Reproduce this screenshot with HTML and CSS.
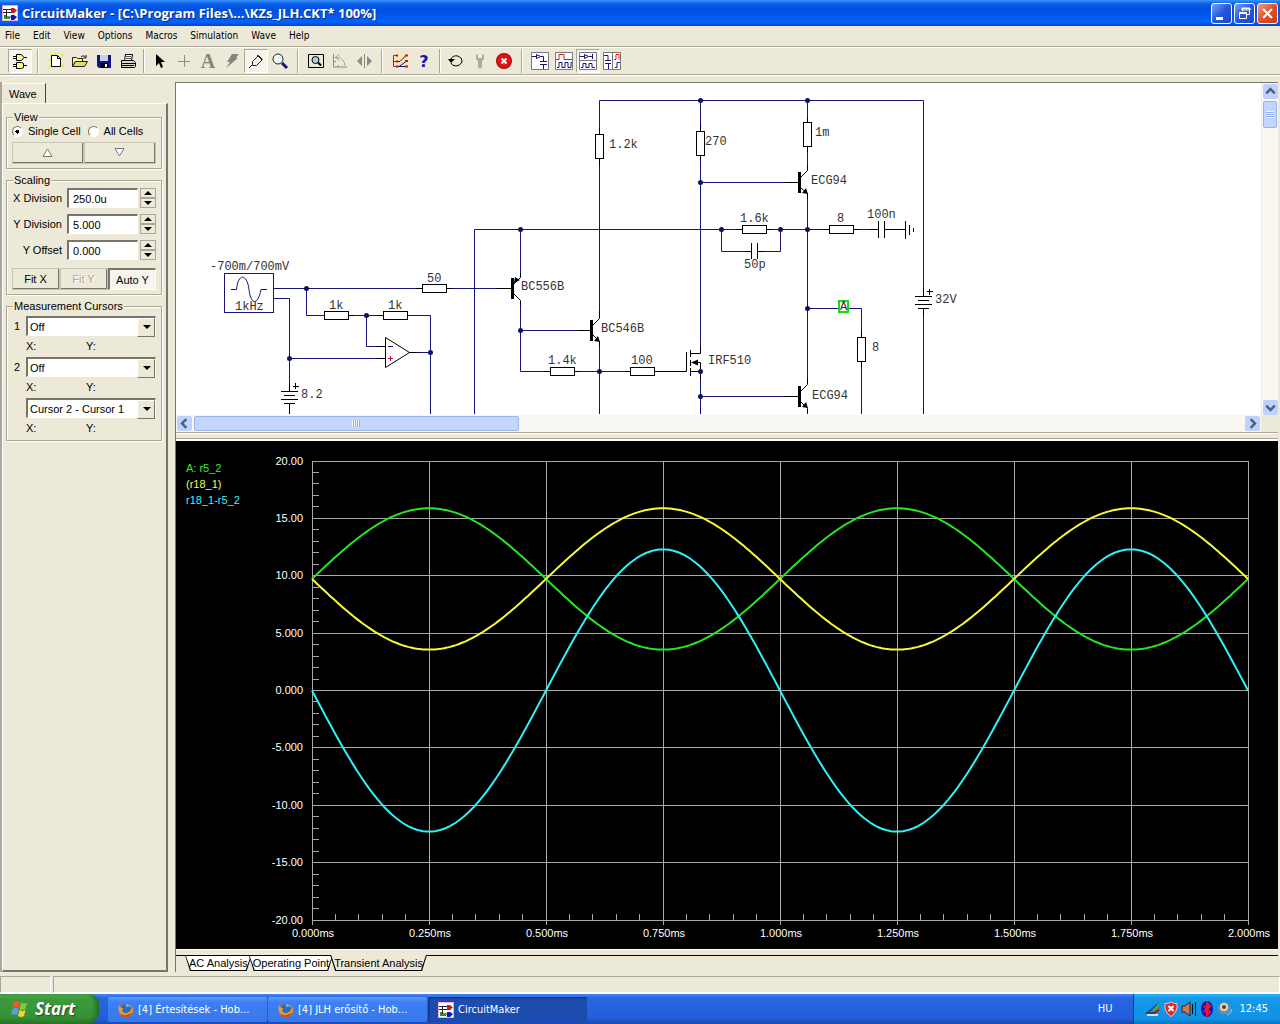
FILE: index.html
```html
<!DOCTYPE html>
<html lang="en">
<head>
  <meta charset="utf-8" />
  <title>CircuitMaker</title>
  <link rel="stylesheet" href="styles.css">
</head>
<body>
  <!-- Shared icons -->
  <svg class="defs" aria-hidden="true">
    <symbol id="app-icon" viewBox="0 0 16 16">
      <rect width="16" height="16" fill="#fff" stroke="#f0a8e0" stroke-width="2"/>
      <path d="M1 4.500h8M1 7.500h8M4.500 4v8h6M4.500 7.500v2" stroke="#222" fill="none"/>
      <path d="M9 3h3l3 2.500-3 2.500h-3z" fill="#d01818"/>
      <path d="M9 10h3l3 2-3 3h-3z" fill="#1414b0"/>
      <path d="M3 10v3h5" stroke="#18a018" stroke-width="2" fill="none"/>
    </symbol>
    <symbol id="firefox" viewBox="0 0 16 16">
      <circle cx="8" cy="8" r="7" fill="#e8650a"/>
      <circle cx="8" cy="6.500" r="5" fill="#2b6cc4"/>
      <path d="M8 2c2 0 4 1 5 3-2-1-3-1-4 0-1-1-2-2-1-3z" fill="#6cc0f0"/>
      <path d="M1.500 3c0 2 1 3 3 3 1 1 0 2-.5 2.500C5 11 8 12 11 10c2-1 3-3 2.500-6 2 3 2 7-1 9.500S3 15 1.500 11 .5 5 1.500 3z" fill="#f39a1e"/>
      <path d="M2 11c3 3 8 3 12-1-1 4-4 5-6 5s-5-1-6-4z" fill="#d2400f"/>
    </symbol>
  </svg>

  <header class="title-bar">
    <svg class="icon"><use href="#app-icon"/></svg>
    <h1>CircuitMaker - [C:\Program Files\...\KZs_JLH.CKT* 100%]</h1>
    <div class="window-buttons">
      <button type="button" aria-label="Minimize"><svg viewBox="0 0 19 19"><path d="M4 13h7v3H4z" fill="#fff"/></svg></button>
      <button type="button" aria-label="Restore"><svg viewBox="0 0 19 19"><path d="M7.500 7V4.500h7v6H12M7 4h8v2H7z" fill="none" stroke="#fff"/><path d="M4.500 8.500h7v6h-7zM4 9.500h8" fill="none" stroke="#fff"/></svg></button>
      <button type="button" aria-label="Close" class="close"><svg viewBox="0 0 19 19"><path d="M5 5l9 9M14 5l-9 9" stroke="#fff" stroke-width="2.200"/></svg></button>
    </div>
  </header>

  <nav class="menu-bar">
    <button type="button">File</button>
    <button type="button">Edit</button>
    <button type="button">View</button>
    <button type="button">Options</button>
    <button type="button">Macros</button>
    <button type="button">Simulation</button>
    <button type="button">Wave</button>
    <button type="button">Help</button>
  </nav>

  <div class="toolbar">
    <button type="button" class="pressed" aria-label="Parts">
      <svg viewBox="0 0 16 16"><path d="M4.500 1.500h5l2.500 3-2.500 3h-5zM4.500 9.500h5l2 1v4l-2 1h-5z" fill="#fbfb90" stroke="#000"/><path d="M1 3.500h3M1 5.500h3M12 4.500h3M1 11.500h3M1 13.500h3M12 12.500h3" stroke="#000"/></svg>
    </button>
    <span class="sep"></span>
    <button type="button" aria-label="New">
      <svg viewBox="0 0 16 16"><path d="M2 1l3 2M13 1l2 2M1 13l2 2M14 12l2 2M1 7h2M7 0v2" stroke="#e8e838" stroke-width="2"/><path d="M3.500 2.500h6l3 3v8h-9z" fill="#fff" stroke="#000"/><path d="M9.500 2.500v3h3" fill="none" stroke="#000"/></svg>
    </button>
    <button type="button" aria-label="Open">
      <svg viewBox="0 0 16 16"><path d="M.5 13.500v-9h4l1 1h5v3h-7z" fill="#fbf6a0" stroke="#222"/><path d="M.5 13.500l3-5h12l-3 5z" fill="#e8dc58" stroke="#222"/><path d="M9 3.500q3-2 5 1M14 2v3h-3" fill="none" stroke="#222"/></svg>
    </button>
    <button type="button" aria-label="Save">
      <svg viewBox="0 0 16 16"><path d="M1 2h14v13H3l-2-2z" fill="#14147c"/><path d="M4 2h8v6H4z" fill="#c8d0e8"/><path d="M5 10h7v5H5z" fill="#000"/><path d="M9 11h2v3H9z" fill="#fff"/></svg>
    </button>
    <button type="button" aria-label="Print">
      <svg viewBox="0 0 16 16"><path d="M4.500 7.500l1-6h7l-1 6z" fill="#fff" stroke="#000"/><path d="M6 3.500h5M6 5.500h5" stroke="#555"/><path d="M1.500 7.500h12l2 2v4l-1 1h-13z" fill="#d8d8d0" stroke="#000"/><path d="M1 10.500h14M2 12.500h12" stroke="#000"/></svg>
    </button>
    <span class="sep tight"></span>
    <button type="button" aria-label="Arrow tool">
      <svg viewBox="0 0 16 16"><path d="M4 1v12l3-3 2 5 2-1-2-5h4z" fill="#000"/></svg>
    </button>
    <button type="button" aria-label="Wire tool">
      <svg viewBox="0 0 16 16"><path d="M2 8.500h12M8.500 2v12" stroke="#8c8c84"/></svg>
    </button>
    <button type="button" aria-label="Text tool">
      <svg viewBox="0 0 16 16"><text x="8" y="15" class="letter-icon serif">A</text></svg>
    </button>
    <button type="button" aria-label="Delete tool">
      <svg viewBox="0 0 16 16"><path d="M8 1h7l-3 4h2L2 15l4-6H3z" fill="#85857d"/></svg>
    </button>
    <button type="button" class="pressed" aria-label="Probe tool">
      <svg viewBox="0 0 16 16"><path d="M1 15l4-4" stroke="#000"/><path d="M4.500 11.500v-3l6-6 4 4-6 6h-4zM9 2l5 5" fill="#f4f2e8" stroke="#222"/></svg>
    </button>
    <button type="button" aria-label="Zoom tool">
      <svg viewBox="0 0 16 16"><circle cx="6" cy="6" r="5" fill="#eefafa" stroke="#222"/><path d="M10 10l5 5" stroke="#14147c" stroke-width="3"/></svg>
    </button>
    <span class="sep"></span>
    <button type="button" aria-label="Fit to window">
      <svg viewBox="0 0 16 16"><path d="M.5 1.500h15v13H.5z" fill="#e8e8dc" stroke="#000"/><circle cx="7.500" cy="7" r="3.500" fill="#a8d4dc" stroke="#000"/><path d="M10 9.500l3 3" stroke="#000" stroke-width="2"/></svg>
    </button>
    <button type="button" aria-label="Rotate">
      <svg viewBox="0 0 16 16"><path d="M1.500 1v13H15" fill="none" stroke="#8c8c84"/><path d="M3 4.500q9-1 10 9" fill="none" stroke="#8c8c84" stroke-dasharray="2 1"/><path d="M7 1.500L4 4.500l3 3M2 8.500h2M6 12v2" fill="none" stroke="#8c8c84"/></svg>
    </button>
    <button type="button" aria-label="Mirror">
      <svg viewBox="0 0 16 16"><path d="M8.500 1v14" stroke="#8c8c84"/><path d="M6 3v10L1 8zM11 3v10l5-5z" fill="#8c8c84"/></svg>
    </button>
    <span class="sep"></span>
    <button type="button" aria-label="Digital options">
      <svg viewBox="0 0 16 16"><path d="M1 1h14v14H1z" fill="#fbe4b0"/><path d="M5 2.500H1.500v11H5M1 8.500h4" fill="none" stroke="#c01818"/><path d="M5 8.500h3l6-6M5 13.500h2l7-5M7 13.500h7" fill="none" stroke="#14147c"/><path d="M4 1.500h2v2H4zM4 7.500h2v2H4zM4 12.500h2v2H4zM13 1.500h3v2h-3zM13 7h3v2h-3zM13 12.500h3v2h-3z" fill="#c01818"/></svg>
    </button>
    <button type="button" aria-label="Help">
      <svg viewBox="0 0 16 16"><text x="8" y="14" class="letter-icon help">?</text></svg>
    </button>
    <span class="sep tight"></span>
    <button type="button" aria-label="Reset">
      <svg viewBox="0 0 16 16"><path d="M3 6q2-4 7-3 5 2 4 6-2 4-6 4-4 0-5-3" fill="none" stroke="#000"/><path d="M0 6h7L3 10z" fill="#000"/></svg>
    </button>
    <button type="button" aria-label="Step">
      <svg viewBox="0 0 16 16"><path d="M4 1v5l2 2v6l2 2 2-2V8l2-2V1l-2 1v3H6V2z" fill="#aeaca0"/></svg>
    </button>
    <button type="button" aria-label="Stop">
      <svg viewBox="0 0 16 16"><circle cx="8" cy="8" r="8" fill="#a80808"/><circle cx="8" cy="8" r="7" fill="#e01414"/><path d="M5.500 5.500l5 5M10.500 5.500l-5 5" stroke="#fff" stroke-width="2"/></svg>
    </button>
    <span class="sep"></span>
    <button type="button" aria-label="Schematic view">
      <svg class="wide" viewBox="0 0 18 18"><path d="M.5.5h17v17H.5z" fill="#fff" stroke="#777"/><path d="M1 4.500h4M5.500 2.500v4l4-2zM10 4.500h2.500v5M9 9.500h7M9 12.500h7M12.500 13v4" fill="none" stroke="#14147c"/></svg>
    </button>
    <button type="button" aria-label="Waveform view">
      <svg class="wide" viewBox="0 0 18 18"><path d="M.5.5h17v17H.5z" fill="#fff" stroke="#777"/><path d="M1 7.500h3v-5h5v5h8" fill="none" stroke="#d01818"/><path d="M2 15.500h2v-5h3v5h3v-5h3v5h3v-5h1" fill="none" stroke="#14147c"/></svg>
    </button>
    <button type="button" class="pressed" aria-label="Split horizontally">
      <svg class="wide" viewBox="0 0 18 18"><path d="M.5.5h17v17H.5zM0 8.500h18" fill="#fff" stroke="#777"/><path d="M1 4.500h4M5.500 2.500v4l4-2zM10 4.500h3M13.500 2v5M2 15.500h2v-4h3v4h3v-4h3v4h3" fill="none" stroke="#14147c"/></svg>
    </button>
    <button type="button" aria-label="Split vertically">
      <svg class="wide" viewBox="0 0 18 18"><path d="M.5.5h17v17H.5zM9.500 0v18" fill="#fff" stroke="#777"/><path d="M1 3.500h4v5M2 8.500h6M2 11.500h6M5.500 12v5M12 15.500h2v-5h3" fill="none" stroke="#14147c"/><path d="M11 7.500h2v-5h3v5" fill="none" stroke="#d01818"/></svg>
    </button>
  </div>

  <main class="workspace">
    <aside class="side-panel">
      <div class="side-tabs"><button type="button" class="side-tab">Wave</button></div>
      <form class="side-body">
        <fieldset class="group view-group">
          <legend>View</legend>
          <div class="radio-row">
            <label><input type="radio" name="cells" checked> Single Cell</label>
            <label><input type="radio" name="cells"> All Cells</label>
          </div>
          <div class="button-row">
            <button type="button" aria-label="Cell up"><svg viewBox="0 0 11 9"><path d="M5.500 1L10 8.500H1z" fill="#fff" stroke="#777"/></svg></button>
            <button type="button" aria-label="Cell down"><svg viewBox="0 0 11 9"><path d="M5.500 8L10 .5H1z" fill="#fff" stroke="#777"/></svg></button>
          </div>
        </fieldset>

        <fieldset class="group scaling-group">
          <legend>Scaling</legend>
          <div class="field">
            <label for="xDivision">X Division</label>
            <input type="text" id="xDivision" value="250.0u">
            <span class="spinner"><button type="button" aria-label="X Division up"></button><button type="button" aria-label="X Division down"></button></span>
          </div>
          <div class="field">
            <label for="yDivision">Y Division</label>
            <input type="text" id="yDivision" value="5.000">
            <span class="spinner"><button type="button" aria-label="Y Division up"></button><button type="button" aria-label="Y Division down"></button></span>
          </div>
          <div class="field">
            <label for="yOffset">Y Offset</label>
            <input type="text" id="yOffset" value="0.000">
            <span class="spinner"><button type="button" aria-label="Y Offset up"></button><button type="button" aria-label="Y Offset down"></button></span>
          </div>
          <div class="button-row">
            <button type="button">Fit X</button>
            <button type="button" disabled>Fit Y</button>
            <button type="button" class="pressed">Auto Y</button>
          </div>
        </fieldset>

        <fieldset class="group cursor-group">
          <legend>Measurement Cursors</legend>
          <div class="cursor-row">
            <label for="cursor1">1</label>
            <span class="select-box"><select id="cursor1"><option>Off</option></select></span>
          </div>
          <div class="readout"><span>X:</span><span>Y:</span></div>
          <div class="cursor-row">
            <label for="cursor2">2</label>
            <span class="select-box"><select id="cursor2"><option>Off</option></select></span>
          </div>
          <div class="readout"><span>X:</span><span>Y:</span></div>
          <div class="cursor-row">
            <span class="select-box"><select aria-label="Cursor difference"><option>Cursor 2 - Cursor 1</option></select></span>
          </div>
          <div class="readout"><span>X:</span><span>Y:</span></div>
        </fieldset>
      </form>
    </aside>

    <section class="documents">
      <div class="schematic-pane">
        <div class="schematic">
          <svg width="1086" height="331" viewBox="176 83 1086 331">
            <!-- Wires -->
            <g class="wire">
              <path d="M273.500 288.500H422M446 288.500H497M306.500 288.500V315.500H324M348 315.500H383M407 315.500H430.500V414M366.500 315.500V346.500H385"/>
              <path d="M273.500 298.500H289.500V384M289.500 358.500H385M409 352.500H430.500"/>
              <path d="M474.500 414V229.500H742M766 229.500H829M853 229.500H870M520.500 229.500V274M520.500 304V371.500H544M520.500 330.500H578"/>
              <path d="M599.500 134V100.500H923.500V288M599.500 165V312M599.500 347V414M580 371.500H625M923.500 316V414"/>
              <path d="M700.500 100.500V131M700.500 160V346M700.500 380V414M700.500 182.500H785M700.500 396.500H785"/>
              <path d="M807.500 100.500V117M807.500 151V165M807.500 199V378M721.500 229.500V251.500H745M764 251.500H780.500V229.500M807.500 308.500H861.500V337M861.500 366V414"/>
              <rect x="224.500" y="273.500" width="49" height="39"/>
              <path d="M231 289.500H236.500C238 273 247 273 249 289.500S258 305 261 289.500H267"/>
            </g>
            <!-- Part leads and symbols -->
            <g class="part">
              <path d="M416 288.500H422M446 288.500H452M497 288.500H511M348 315.500H354M377 315.500H383M385 346.500H377M385 358.500H377"/>
              <path d="M385.500 337.500V367.500L409.500 352.500zM409 352.500H417"/>
              <path d="M289.500 384V391.500M281 391.500H298M284 395.500H295M281 399.500H298M284 403.500H295M289.500 403.500V414M295.500 383V389M293 386.500H299"/>
              <path d="M923.500 288V296.500M915 296.500H932M918 300.500H929M915 304.500H932M918 308.500H929M923.500 308.500V316M929.500 289V295M927 291.500H933"/>
              <path d="M513 285L520.500 277.500V273M513 293L520.500 300.500V305M578 330.500H591M593 325L599.500 318.500V311M593 335L599.500 341.500V347"/>
              <path d="M599.500 128V134M599.500 158V165M700.500 125V131M700.500 155V161M807.500 117V122M807.500 146V152M861.500 331V337M861.500 361V367"/>
              <path d="M785 182.500H799M801 177L807.500 170.500V165M801 188L807.500 193.500V199M785 396.500H799M801 391L807.500 384.500V378M801 402L807.500 408.500V414"/>
              <path d="M544 371.500H550M574 371.500H580M625 371.500H630M654 371.500H686.500V352M690.500 350V357M690.500 360V366M690.500 368V376M690.500 353.500H700.500V346M692 362.500H700.500V380M690.500 371.500H700.500"/>
              <path d="M736 229.500H742M766 229.500H772M751.500 243V259M757.500 243V259M745 251.500H751.500M757.500 251.500H764"/>
              <path d="M823 229.500H829M853 229.500H859M870 229.500H878.500V221M878.500 221V238M884.500 221V238M884.500 229.500H905.500M905.500 221V239M909.500 225V235M913.500 228V232"/>
              <rect x="422.500" y="284.500" width="24" height="8"/>
              <rect x="324.500" y="311.500" width="24" height="8"/>
              <rect x="383.500" y="311.500" width="24" height="8"/>
              <rect x="550.500" y="367.500" width="24" height="8"/>
              <rect x="630.500" y="367.500" width="24" height="8"/>
              <rect x="742.500" y="225.500" width="24" height="8"/>
              <rect x="829.500" y="225.500" width="24" height="8"/>
              <rect x="595.500" y="134.500" width="8" height="24"/>
              <rect x="696.500" y="131.500" width="8" height="24"/>
              <rect x="803.500" y="122.500" width="8" height="24"/>
              <rect x="857.500" y="337.500" width="8" height="24"/>
            </g>
            <g class="solid">
              <path d="M511 278h3v21h-3zM590 320h3v21h-3zM798 172h3v21h-3zM798 386h3v21h-3z"/>
              <path d="M514 283l1-6 5 3zM600 342l-2-6-4 5zM808 194l-2-6-4 5zM808 408l-2-6-4 5zM691 362.500l7-3v6z"/>
            </g>
            <path d="M388 346.500H393" stroke="#14147c"/>
            <path d="M388 358.500H393M390.500 356V361" stroke="#c01030"/>
            <g class="node">
              <circle cx="306.500" cy="288.500" r="2.500"/><circle cx="366.500" cy="315.500" r="2.500"/>
              <circle cx="289.500" cy="358.500" r="2.500"/><circle cx="430.500" cy="352.500" r="2.500"/>
              <circle cx="520.500" cy="229.500" r="2.500"/><circle cx="520.500" cy="330.500" r="2.500"/>
              <circle cx="599.500" cy="371.500" r="2.500"/><circle cx="700.500" cy="100.500" r="2.500"/>
              <circle cx="807.500" cy="100.500" r="2.500"/><circle cx="700.500" cy="182.500" r="2.500"/>
              <circle cx="721.500" cy="229.500" r="2.500"/><circle cx="780.500" cy="229.500" r="2.500"/>
              <circle cx="807.500" cy="229.500" r="2.500"/><circle cx="807.500" cy="308.500" r="2.500"/>
              <circle cx="700.500" cy="371.500" r="2.500"/><circle cx="700.500" cy="396.500" r="2.500"/>
            </g>
            <!-- Probe A -->
            <rect x="839" y="301" width="9" height="11" fill="#fff" stroke="#12dc12" stroke-width="2"/>
            <g class="part-label">
              <text x="210" y="270">-700m/700mV</text>
              <text x="235" y="310">1kHz</text>
              <text x="427" y="282">50</text>
              <text x="329" y="309">1k</text>
              <text x="388" y="309">1k</text>
              <text x="301" y="398">8.2</text>
              <text x="521" y="290">BC556B</text>
              <text x="601" y="332">BC546B</text>
              <text x="548" y="364">1.4k</text>
              <text x="631" y="364">100</text>
              <text x="708" y="364">IRF510</text>
              <text x="609" y="148">1.2k</text>
              <text x="705" y="145">270</text>
              <text x="815" y="136">1m</text>
              <text x="811" y="184">ECG94</text>
              <text x="812" y="399">ECG94</text>
              <text x="740" y="222">1.6k</text>
              <text x="744" y="268">50p</text>
              <text x="837" y="222">8</text>
              <text x="867" y="218">100n</text>
              <text x="872" y="351">8</text>
              <text x="935" y="303">32V</text>
              <text x="840" y="310">A</text>
            </g>
          </svg>
        </div>
        <div class="scrollbar vertical">
          <button type="button" aria-label="Scroll up"><svg viewBox="0 0 9 9"><path d="M1 6l3.500-3.500L8 6"/></svg></button>
          <span class="thumb"></span>
          <button type="button" class="end" aria-label="Scroll down"><svg viewBox="0 0 9 9"><path d="M1 3l3.500 3.500L8 3"/></svg></button>
        </div>
        <div class="scrollbar horizontal">
          <button type="button" aria-label="Scroll left"><svg viewBox="0 0 9 9"><path d="M6 1L2.500 4.500 6 8"/></svg></button>
          <span class="thumb"></span>
          <button type="button" class="end" aria-label="Scroll right"><svg viewBox="0 0 9 9"><path d="M3 1l3.500 3.500L3 8"/></svg></button>
        </div>
      </div>

      <div class="splitter"></div>

      <div class="plot-pane"><svg id="plot"></svg></div>

      <nav class="sheet-tabs">
        <button type="button">AC Analysis</button>
        <button type="button">Operating Point</button>
        <button type="button" class="active">Transient Analysis</button>
        <span class="tab-rest"></span>
      </nav>
    </section>
  </main>

  <div class="status-bar"><span class="status-cell small"></span><span class="status-cell"></span></div>

  <footer class="taskbar">
    <button type="button" class="start">
      <svg viewBox="0 0 18 18"><path d="M3 2q3-2 6 0L7.500 8q-3-2-6 0z" fill="#f0582a"/><path d="M10 2.500q3 2 6 0L14.500 9q-3 2-6 0z" fill="#84c63c"/><path d="M1.500 9q3-2 6 0L6 15q-3-2-6 0z" fill="#5c9cf0"/><path d="M8.500 10q3 2 6 0L13 16q-3 2-6 0z" fill="#fad030"/></svg>
      Start
    </button>
    <div class="tasks">
      <button type="button"><svg class="icon"><use href="#firefox"/></svg>[4] Értesítések - Hob...</button>
      <button type="button"><svg class="icon"><use href="#firefox"/></svg>[4] JLH erősítő - Hob...</button>
      <button type="button" class="active"><svg class="icon"><use href="#app-icon"/></svg>CircuitMaker</button>
    </div>
    <span class="language">HU</span>
    <div class="tray">
      <svg viewBox="0 0 16 16"><path d="M2 13h11v2H2z" fill="#ddd"/><path d="M1 12L13 2l-2 6z" fill="#1838a0"/><path d="M6 10l8-8-1 6z" fill="#38b838"/><path d="M7 12l8-7v3l-5 4z" fill="#e03838"/><path d="M1 12h9l4-3" stroke="#111" fill="none"/></svg>
      <svg viewBox="0 0 16 16"><path d="M8 1q3 2 6 1.500Q15 11 8 15.500 1 11 2 2.500 5 3 8 1z" fill="#e02828" stroke="#f4c4c4"/><path d="M5.500 5l5 5M10.500 5l-5 5" stroke="#fff" stroke-width="2"/></svg>
      <svg viewBox="0 0 16 16"><path d="M1 5h3l5-4v14l-5-4H1z" fill="#d87848" stroke="#222"/><path d="M11.500 3v10M14.500 1v14" stroke="#111"/></svg>
      <svg viewBox="0 0 16 16"><ellipse cx="8" cy="8" rx="6" ry="8" fill="#1414b8"/><path d="M5 5l6 6-3 3V2l3 3-6 6" fill="none" stroke="#e81830" stroke-width="2"/></svg>
      <svg viewBox="0 0 16 16"><circle cx="7" cy="7" r="6" fill="#8a8a88"/><circle cx="7" cy="6" r="4" fill="#d8d8d0"/><circle cx="7" cy="6" r="2" fill="#444"/><path d="M10 14q4-1 5-6" stroke="#a8c8f8" fill="none"/></svg>
      <time>12:45</time>
    </div>
  </footer>

  <script src="plot.js"></script>
</body>
</html>
```
FILE: styles.css
```css
* {
  box-sizing: border-box;
}
body {
  display: flex;
  flex-direction: column;
  height: 100vh;
  margin: 0;
  overflow: hidden;
  background-color: #ece9d8;
  color: #000;
  font-family: "Liberation Sans", Arial, sans-serif;
  font-size: 11px;
  line-height: 14px;
}
button, input, select {
  margin: 0;
  padding: 0;
  border: 0;
  border-radius: 0;
  background: none;
  color: inherit;
  font: inherit;
}
svg {
  display: block;
  flex: none;
}
.defs {
  position: absolute;
  width: 0;
  height: 0;
}
.icon {
  width: 16px;
  height: 16px;
}

/* Title bar */
.title-bar {
  display: flex;
  flex: none;
  align-items: center;
  gap: 4px;
  height: 26px;
  padding: 0 2px;
  background: linear-gradient(#3a94fc 0, #0a5ce6 4px, #0050e0 10px, #0462fc 22px, #0046c8 26px);
  color: #fff;
}
.title-bar h1 {
  flex: 1;
  margin: 0;
  font: bold 13px/20px "Open Sans", sans-serif;
  text-shadow: 1px 1px #0a2a80;
}
.window-buttons {
  display: flex;
  gap: 2px;
}
.window-buttons button {
  width: 21px;
  height: 21px;
  border: 1px solid #fff;
  border-radius: 3px;
  background: linear-gradient(135deg, #7aa2f4, #2458dc 50%, #1c48c8);
}
.window-buttons svg {
  width: 19px;
  height: 19px;
}
.window-buttons .close {
  background: linear-gradient(135deg, #f0a088, #e05028 50%, #c83c10);
}

/* Menu */
.menu-bar {
  display: flex;
  flex: none;
  gap: 13px;
  height: 21px;
  padding: 0 5px;
  border-bottom: 1px solid #aca899;
  font: 10px/18px "DejaVu Sans Condensed", "Liberation Sans", sans-serif;
}

/* Toolbar */
.toolbar {
  display: flex;
  flex: none;
  align-items: center;
  height: 28px;
  padding: 0 8px;
  border-top: 1px solid #fff;
  border-bottom: 1px solid #aca899;
}
.toolbar button {
  display: flex;
  align-items: center;
  justify-content: center;
  width: 24px;
  height: 24px;
}
.toolbar svg {
  width: 16px;
  height: 16px;
  overflow: visible;
}
.toolbar svg.wide {
  width: 18px;
  height: 18px;
}
.pressed {
  border: 1px solid;
  border-color: #aca899 #fff #fff #aca899;
  background-color: #f6f4ec;
}
.sep {
  width: 2px;
  height: 24px;
  margin: 0 5px;
  border-left: 1px solid #aca899;
  border-right: 1px solid #fff;
}
.sep.tight {
  margin: 0 3px;
}
.letter-icon {
  font-weight: bold;
  text-anchor: middle;
}
.letter-icon.serif {
  fill: #85857d;
  font-family: "Liberation Serif", serif;
  font-size: 20px;
}
.letter-icon.help {
  fill: #1414b0;
  font-family: "DejaVu Sans", sans-serif;
  font-size: 16px;
}

/* Workspace */
.workspace {
  display: flex;
  flex: 1;
  min-height: 0;
  padding: 6px 2px 4px 0;
  border-top: 1px solid #fff;
}
.side-panel {
  display: flex;
  flex: none;
  flex-direction: column;
  width: 168px;
  border-left: 2px solid #aca899;
}
.side-tab {
  height: 20px;
  padding: 0 8px 0 7px;
  border-top: 1px solid #fff;
  border-right: 1px solid #444;
}
.side-body {
  flex: 1;
  padding: 6px 4px 6px 3px;
  border: solid;
  border-width: 1px 2px 2px 1px;
  border-color: #fff #77756a #77756a #fff;
}
.side-tabs {
  padding-top: 1px;
}
.group {
  min-width: 0;
  margin: 0 0 4px;
  padding: 0 5px 4px;
  border: 1px solid #aca899;
  box-shadow: inset 1px 1px #fff, 1px 1px #fff;
}
.group legend {
  margin-left: 1px;
  padding: 0 1px;
  background-color: #ece9d8;
}
.radio-row {
  display: flex;
  gap: 7px;
  padding-bottom: 4px;
}
.radio-row label {
  display: flex;
  align-items: center;
  gap: 5px;
}
.radio-row input {
  appearance: none;
  width: 11px;
  height: 11px;
  border: 1px solid;
  border-color: #77756a #fff #fff #77756a;
  border-radius: 50%;
  background-color: #fff;
}
.radio-row input:checked {
  background-image: radial-gradient(#000 2px, transparent 2px);
}
.button-row {
  display: flex;
}
.button-row button {
  display: flex;
  flex: 1;
  align-items: center;
  justify-content: center;
  height: 22px;
  border: solid;
  border-width: 1px 2px 2px 1px;
  border-color: #fff #77756a #77756a #fff;
  outline: 1px solid #c8c4b4;
  outline-offset: -1px;
}
.button-row svg {
  width: 11px;
  height: 9px;
}
.button-row button:disabled {
  color: #aca899;
  text-shadow: 1px 1px #fff;
}
.button-row .pressed {
  border-width: 2px 1px 1px 2px;
  border-color: #77756a #fff #fff #77756a;
  outline: 0;
}
.scaling-group {
  padding-top: 1px;
}
.scaling-group .button-row {
  padding-top: 2px;
}
.field {
  display: flex;
  align-items: center;
  height: 20px;
  margin-bottom: 6px;
}
.field label {
  width: 50px;
  margin-right: 5px;
  text-align: right;
  white-space: nowrap;
}
.field input {
  width: 71px;
  height: 20px;
  padding: 0 4px;
  border: solid;
  border-width: 2px 1px 1px 2px;
  border-color: #77756a #fff #fff #77756a;
  background-color: #fff;
}
.spinner {
  display: flex;
  flex: none;
  flex-direction: column;
  width: 16px;
  height: 20px;
  margin-left: 2px;
}
.spinner button {
  display: flex;
  flex: 1;
  align-items: center;
  justify-content: center;
  border: 1px solid;
  border-color: #fff #77756a #77756a #fff;
  outline: 1px solid #aca899;
  outline-offset: -1px;
}
.spinner button::before {
  border: 4px solid transparent;
  border-top-width: 0;
  border-bottom: 4px solid #000;
  content: "";
}
.spinner button + button::before {
  border-top: 4px solid #000;
  border-bottom-width: 0;
}
.cursor-group {
  padding-top: 3px;
  padding-bottom: 1px;
}
.cursor-row {
  display: flex;
  align-items: center;
  justify-content: flex-end;
}
.cursor-row label {
  flex: 1;
  padding-left: 2px;
}
.select-box {
  position: relative;
  width: 130px;
}
.select-box select {
  display: block;
  width: 100%;
  height: 20px;
  padding: 0 2px;
  appearance: none;
  border: solid;
  border-width: 2px 1px 1px 2px;
  border-color: #77756a #fff #fff #77756a;
  background-color: #fff;
}
.select-box::before {
  position: absolute;
  top: 2px;
  right: 1px;
  width: 16px;
  height: 17px;
  border: 1px solid;
  border-color: #fff #77756a #77756a #fff;
  background-color: #ece9d8;
  content: "";
  pointer-events: none;
}
.select-box::after {
  position: absolute;
  top: 9px;
  right: 5px;
  border: 4px solid transparent;
  border-top-color: #000;
  border-bottom-width: 0;
  content: "";
  pointer-events: none;
}
.readout {
  display: flex;
  padding: 3px 0 4px 14px;
}
.readout span {
  width: 60px;
}

/* Documents */
.documents {
  display: flex;
  flex: 1;
  flex-direction: column;
  min-width: 0;
  margin-left: 7px;
  border-left: 1px solid #77756a;
}
.schematic-pane {
  display: grid;
  flex: 350;
  grid-template-rows: minmax(0, 1fr) 17px;
  grid-template-columns: minmax(0, 1fr) 17px;
  min-height: 0;
  border-top: 1px solid #77756a;
  border-bottom: 1px solid #aca899;
}
.schematic {
  overflow: hidden;
  background-color: #fff;
}
.wire {
  fill: none;
  stroke: #14147c;
}
.part {
  fill: none;
  stroke: #000;
}
.part rect {
  fill: #fff;
}
.solid {
  fill: #000;
}
.node {
  fill: #10105c;
}
.part-label {
  fill: #333;
  font: 12px "Liberation Mono", "Courier New", monospace;
}

/* Scrollbars */
.scrollbar {
  display: flex;
  gap: 2px;
  background-color: #f8f7f2;
}
.scrollbar.vertical {
  flex-direction: column;
  padding: 1px 1px 0;
  border-left: 1px solid #eeede5;
}
.scrollbar.horizontal {
  padding: 1px;
}
.scrollbar button {
  display: flex;
  align-items: center;
  justify-content: center;
  width: 15px;
  height: 15px;
  border-radius: 2px;
  background-color: #c0d2fc;
}
.scrollbar .end {
  margin-top: auto;
}
.scrollbar.horizontal .end {
  margin: 0 0 0 auto;
}
.scrollbar svg {
  width: 11px;
  height: 11px;
  fill: none;
  stroke: #4a6084;
  stroke-width: 2;
}
.thumb {
  display: flex;
  align-items: center;
  justify-content: center;
  border: 1px solid #98b4ec;
  border-radius: 2px;
  background-color: #c4d5fd;
}
.thumb::before {
  width: 8px;
  height: 7px;
  background: repeating-linear-gradient(90deg, #eef4fe 0 1px, #8cb0f8 1px 2px);
  content: "";
}
.vertical .thumb {
  height: 27px;
}
.vertical .thumb::before {
  background: repeating-linear-gradient(#eef4fe 0 1px, #8cb0f8 1px 2px);
}
.horizontal .thumb {
  width: 30%;
}
.splitter {
  flex: none;
  height: 8px;
  border-top: 1px solid #fff;
  border-bottom: 2px solid #fff;
  background: linear-gradient(#ece9d8 4px, #aca899 4px);
}

/* Waveforms */
.plot-pane {
  flex: 509;
  min-height: 0;
  background-color: #000;
}
.plot-pane svg {
  width: 100%;
  height: 100%;
}
.grid {
  fill: none;
  stroke: #a8a8a8;
}
.axis-label {
  fill: #fff;
}
.trace {
  fill: none;
  stroke-width: 2;
}
.trace.green {
  stroke: #24e624;
}
.trace.yellow {
  stroke: #f8f838;
}
.trace.cyan {
  stroke: #30f0f8;
}
.key.green {
  fill: #38e838;
}
.key.yellow {
  fill: #f8f860;
}
.key.cyan {
  fill: #40f0f8;
}

/* Analysis tabs */
.sheet-tabs {
  display: flex;
  flex: none;
  height: 23px;
  padding-top: 5px;
  border-top: 1px solid #fff;
}
.sheet-tabs::before {
  width: 12px;
  border-top: 1px solid #000;
  content: "";
}
.sheet-tabs button {
  position: relative;
  height: 16px;
  margin-left: -3px;
  padding: 0 4px;
}
.sheet-tabs button::before {
  position: absolute;
  inset: 0;
  z-index: -1;
  background-color: #000;
  clip-path: polygon(0 0, 100% 0, calc(100% - 5px) 100%, 5px 100%);
  content: "";
}
.sheet-tabs button::after {
  position: absolute;
  inset: 1px;
  z-index: -1;
  background-color: #fff;
  clip-path: polygon(0 0, 100% 0, calc(100% - 5px) 100%, 5px 100%);
  content: "";
}
.sheet-tabs .active::after {
  top: 0;
  background-color: #ece9d8;
}
.tab-rest {
  flex: 1;
  border-top: 1px solid #000;
}

/* Status bar */
.status-bar {
  display: flex;
  flex: none;
  gap: 2px;
  height: 18px;
  border-bottom: 1px solid #fff;
}
.status-cell {
  flex: 1;
  border: 1px solid;
  border-color: #aca899 #fff #fff #aca899;
}
.status-cell.small {
  flex: 0 0 51px;
}

/* Taskbar */
.taskbar {
  display: flex;
  flex: none;
  align-items: stretch;
  height: 30px;
  background: linear-gradient(#4488ec 0, #2a66e0 4px, #245ddb 24px, #1c48b4 30px);
  color: #fff;
  font: 11px/14px "DejaVu Sans Condensed", "Liberation Sans", sans-serif;
}
.start {
  display: flex;
  align-items: center;
  gap: 6px;
  width: 99px;
  padding-left: 11px;
  border-radius: 0 10px 12px 0;
  background: linear-gradient(#5cb85c 0, #3c9a3c 5px, #379237 22px, #2a7a2a 30px);
  box-shadow: inset -3px 0 4px #246c24;
  font: italic bold 17px/24px "Open Sans", sans-serif;
  text-shadow: 1px 1px 2px #1c4a1c;
}
.start svg {
  width: 18px;
  height: 18px;
}
.tasks {
  display: flex;
  flex: 1;
  gap: 1px;
  padding: 3px 0 2px 9px;
}
.tasks button {
  display: flex;
  align-items: center;
  gap: 4px;
  width: 159px;
  padding-left: 10px;
  border-radius: 2px;
  background: linear-gradient(#5a9cfc, #3c80f4 5px, #3878ec);
  white-space: nowrap;
}
.tasks .active {
  background: #1c4cae;
  box-shadow: inset 1px 1px 2px #10307c;
}
.language {
  align-self: center;
  margin-right: 21px;
}
.tray {
  display: flex;
  align-items: center;
  gap: 2px;
  padding: 0 12px 0 11px;
  border-left: 1px solid #0c3c98;
  background: linear-gradient(#30b0f4 0, #149aea 4px, #1290e4 25px, #0c70c0 30px);
}
.tray svg {
  width: 16px;
  height: 16px;
}
.tray time {
  margin-left: 4px;
}
```
FILE: plot.js
```js
// Draws the transient analysis waveforms
var SVG_NS = "http://www.w3.org/2000/svg";
var plot = document.getElementById("plot");

var traces = [
  { color: "green", name: "A: r5_2", offset: 9.72, amplitude: 6.16 },
  { color: "yellow", name: "(r18_1)", offset: 9.72, amplitude: -6.16 },
  { color: "cyan", name: "r18_1-r5_2", offset: 0, amplitude: -12.3 }
];

function add(tag, attrs, text) {
  var el = document.createElementNS(SVG_NS, tag);
  for (var key in attrs) {
    el.setAttribute(key, attrs[key]);
  }
  if (text) {
    el.textContent = text;
  }
  plot.appendChild(el);
}

// Snap to the pixel centre so that lines stay sharp
function snap(v) {
  return Math.floor(v) + 0.5;
}

function yLabel(v) {
  return Math.abs(v) >= 10 ? v.toFixed(2) : v.toFixed(3);
}

function draw() {
  plot.innerHTML = "";
  var left = 136, top = 20;
  var width = plot.clientWidth - left - 30;
  var height = plot.clientHeight - top - 29;
  var right = left + width, bottom = top + height;
  var i, x, y, d = "";

  for (i = 0; i <= 40; i++) {
    y = snap(top + i * height / 40);
    d += "M" + left + " " + y + "H" + (i % 5 ? left + 7 : right + 1);
    x = snap(left + i * width / 40);
    d += i % 5 ? "M" + x + " " + (bottom - 6) + "V" + bottom : "M" + x + " " + top + "V" + (bottom + 5);
  }
  add("path", { "class": "grid", d: d });

  for (i = 0; i <= 8; i++) {
    add("text", { "class": "axis-label", x: left - 9, y: Math.floor(top + i * height / 8) + 4, "text-anchor": "end" }, yLabel(20 - i * 5));
    add("text", { "class": "axis-label", x: left + 1 + i * width / 8, y: bottom + 17, "text-anchor": "middle" }, (i * 0.25).toFixed(3) + "ms");
  }

  traces.forEach(function (t, n) {
    var points = [];
    for (var px = 0; px <= width; px += 3) {
      var v = t.offset + t.amplitude * Math.sin(px / width * 4 * Math.PI);
      points.push((left + px) + "," + (top + (20 - v) * height / 40).toFixed(1));
    }
    add("polyline", { "class": "trace " + t.color, points: points.join(" ") });
    add("text", { "class": "key " + t.color, x: 10, y: 31 + n * 16 }, t.name);
  });
}

draw();
window.addEventListener("resize", draw);
```
